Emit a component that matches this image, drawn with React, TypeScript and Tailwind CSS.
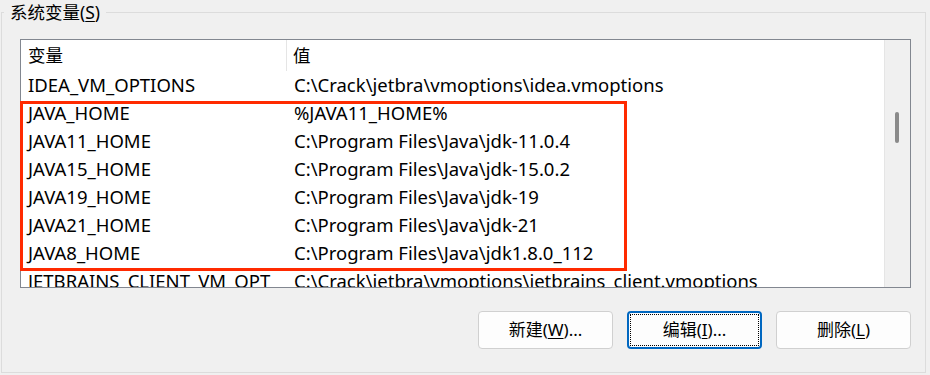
const rows: [string, string][] = [
  ["IDEA_VM_OPTIONS", "C:\\Crack\\jetbra\\vmoptions\\idea.vmoptions"],
  ["JAVA_HOME", "%JAVA11_HOME%"],
  ["JAVA11_HOME", "C:\\Program Files\\Java\\jdk-11.0.4"],
  ["JAVA15_HOME", "C:\\Program Files\\Java\\jdk-15.0.2"],
  ["JAVA19_HOME", "C:\\Program Files\\Java\\jdk-19"],
  ["JAVA21_HOME", "C:\\Program Files\\Java\\jdk-21"],
  ["JAVA8_HOME", "C:\\Program Files\\Java\\jdk1.8.0_112"],
  ["JETBRAINS_CLIENT_VM_OPT", "C:\\Crack\\jetbra\\vmoptions\\jetbrains_client.vmoptions"],
];

function Button({ label, hot, rest, focused }: { label: string; hot: string; rest: string; focused?: boolean }) {
  return (
    <button
      className={
        "flex h-[38px] w-[135px] items-center justify-center rounded-[4px] bg-[#fdfdfd] text-[17px] text-black " +
        (focused ? "border-2 border-[#0067c0]" : "border border-[#d0d0d0]")
      }
    >
      <span className={focused ? "flex h-[32px] w-[129px] items-center justify-center border border-dotted border-black" : ""}>
        {label}(<span className="underline underline-offset-2">{hot}</span>){rest}
      </span>
    </button>
  );
}

export default function App() {
  return (
    <div
      className="relative h-[375px] w-[930px] overflow-hidden bg-[#f0f0f0] text-black"
      style={{ fontFamily: '"Noto Sans", "Noto Sans CJK SC", sans-serif' }}
    >
      <div className="ml-[1px] mt-[12px] h-[361px] w-[925px] border border-[#dcdcdc]">
        <div className="ml-[18px] mt-[26px] flex h-[249px] w-[891px] overflow-hidden border border-[#828790] bg-white">
          <div className="flex-1 overflow-hidden">
            <div className="flex h-[31px] items-center text-[17.5px]">
              <div className="h-full w-[266px] border-r border-[#e5e5e5] pl-[7px] leading-[31px]">变量</div>
              <div className="pl-[6px]">值</div>
            </div>
            {rows.map(([k, v]) => (
              <div key={k} className="flex h-[28px] items-center whitespace-nowrap text-[18.5px]">
                <div className="w-[267px] overflow-hidden pl-[7px]">{k}</div>
                <div className="pl-[6px]">{v}</div>
              </div>
            ))}
          </div>
          <div className="relative w-[26px] shrink-0 border-l border-[#e5e5e5] bg-[#f0f0f0]">
            <div className="absolute left-[10px] top-[72px] h-[31px] w-[4px] rounded-full bg-[#8a8a8a]" />
          </div>
        </div>
        <div className="mr-[14px] mt-[23px] flex justify-end gap-[14px]">
          <Button label="新建" hot="W" rest="..." />
          <Button label="编辑" hot="I" rest="..." focused />
          <Button label="删除" hot="L" rest="" />
        </div>
      </div>
      <div className="absolute left-[4px] top-[1px] bg-[#f0f0f0] px-[6px] text-[17.5px] leading-[22px]">
        系统变量(<span className="underline underline-offset-2">S</span>)
      </div>
      <div className="absolute left-[20px] top-[101px] h-[170px] w-[607px] border-[3px] border-[#ff2a00]" />
    </div>
  );
}
